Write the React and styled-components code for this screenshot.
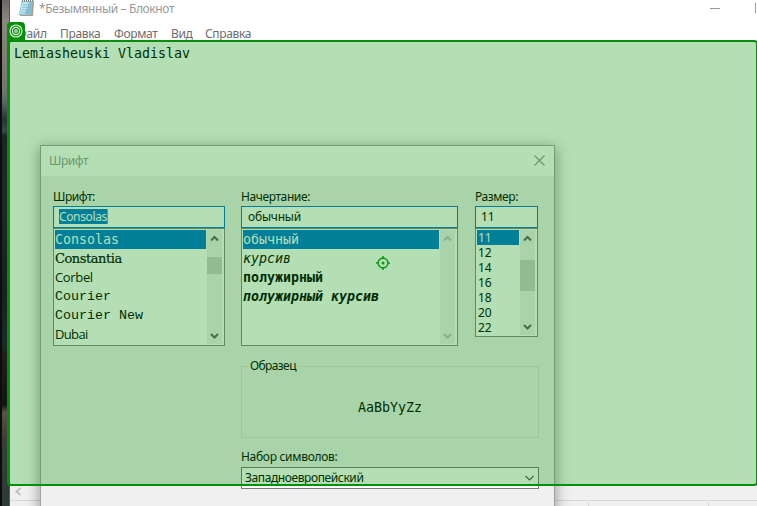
import React from "react";
import styled, { createGlobalStyle, css } from "styled-components";

const Global = createGlobalStyle`
  * { box-sizing: border-box; }
  body { margin: 0; overflow: hidden; font: 12px/16px "Noto Sans", "Open Sans", sans-serif; color: #000; }
`;

const mono = css`font-family: "DejaVu Sans Mono", monospace; font-size: 13.3px; letter-spacing: 0;`;

const Desktop = styled.div`
  position: relative; display: flex; width: 757px; height: 506px; overflow: hidden; background: #fff;
`;
const Wallpaper = styled.div`
  flex: none; width: 10px; border-left: 2px solid #0c0c0c; border-right: 1px solid #555;
  background: linear-gradient(#6b6864 0, #8a8780 20px, #77746f 90px, #5f6a6c 100px, #283238 120px, #3a484c 131px, #1c2426 136px, #202829 200px, #192021 290px, #1d292b 345px, #221d1b 355px, #151515 405px, #5c5047 412px, #403a37 440px, #343e3d 452px, #2d3937 506px);
`;
const Notepad = styled.div`flex: 1; display: flex; flex-direction: column; min-width: 0;`;
const TitleBar = styled.div`
  display: flex; align-items: center; height: 20px; padding: 0 1px 2px 9px; color: #999;
`;
const Title = styled.span`margin-left: 5px; letter-spacing: -.38px; white-space: nowrap;`;
const Minimize = styled.i`margin: 0 35px 1px auto; width: 10px; height: 1px; background: #999;`;
const MaxEdge = styled.i`width: 1px; height: 10px; margin-bottom: 2px; background: #999;`;
const MenuBar = styled.div`display: flex; height: 20px; padding: 6px 0 0 7px; color: #6d6d6d;`;
const MenuItem = styled.span`width: ${p => p.$w}px; letter-spacing: -.35px; white-space: nowrap;`;
const Editor = styled.div`
  ${mono} flex: 1; padding: 4px 4px; border-top: 2px solid #f0f0f0; line-height: 16px;
`;
const HScroll = styled.div`height: 15px; padding: 1px 0 0 3px; background: #f0f0f0;`;
const StatusBar = styled.div`
  display: flex; height: 6px; padding-top: 1px; border-top: 1px solid #d7d7d7; background: #f0f0f0;
`;
const StatusCell = styled.i`width: ${p => p.$w}px; border-right: 1px solid #d7d7d7;`;

const Dialog = styled.div`
  position: absolute; left: 40px; top: 145px; width: 515px; height: 380px;
  border: 1px solid #a2a2a2; background: #f0f0f0; box-shadow: 0 3px 13px 1px rgba(0,0,0,.36);
`;
const DialogTitle = styled.div`
  display: flex; align-items: center; justify-content: space-between; height: 30px;
  padding: 0 9px 0 8px; background: #fff; color: #999; letter-spacing: -.5px;
`;
const CloseIcon = styled.svg`margin-bottom: 2px;`;
const DialogBody = styled.div`padding: 12px 15px 0 12px;`;
const Pickers = styled.div`display: flex; align-items: flex-start;`;
const Field = styled.div`width: ${p => p.$w}px; margin-right: ${p => p.$gap || 0}px;`;
const Label = styled.div`height: 18px; line-height: 17px; letter-spacing: ${p => p.$ls ?? -0.4}px; white-space: nowrap;`;
const Edit = styled.div`
  height: 22px; padding: 2px 5px; border: 1px solid #0078d7; background: #fff; line-height: 16px;
`;
const Selected = styled.span`
  display: inline-block; height: 15px; line-height: 15px; background: #0078d7; color: #fff; border-right: 1px solid #e88b2a; letter-spacing: -.37px;
`;
const EditText = styled.span`padding-left: ${p => p.$pad || 0}px; letter-spacing: -.2px;`;
const List = styled.div`
  display: flex; height: ${p => p.$h}px; padding: 1px 2px 1px 1px; border: 1px solid #828790; background: #fff;
`;
const Items = styled.div`flex: 1; margin-right: 1px;`;
const faces = {
  mono,
  italic: css`${mono} font-style: italic;`,
  bold: css`${mono} font-weight: bold;`,
  boldItalic: css`${mono} font-weight: bold; font-style: italic;`,
  serif: css`font: 500 13px "DejaVu Serif", serif; letter-spacing: -.45px; -webkit-text-stroke: .2px;`,
  sans: css`font-family: "Open Sans", sans-serif; font-size: 13px; letter-spacing: -.35px;`,
  sansTight: css`font-family: "Open Sans", sans-serif; font-size: 13px; letter-spacing: -.65px;`,
  courier: css`font-family: "Liberation Mono", monospace; font-size: 13.33px;`,
  ui: css`font-size: 12px; letter-spacing: -.2px;`,
};
const Item = styled.div`
  ${p => faces[p.$face]}
  height: ${p => p.$h}px; line-height: ${p => p.$h}px; white-space: nowrap; padding-left: ${p => p.$pad || 0}px;
  ${p => p.$on && css`background: #0078d7; color: #fff;`}
`;
const Track = styled.div`
  display: flex; flex-direction: column; justify-content: space-between; width: 15px; background: #f0f0f0;
`;
const Thumb = styled.i`height: ${p => p.$h}px; margin: ${p => p.$top}px 0 auto; background: #cdcdcd;`;
const Arrow = styled.svg`display: block; width: 15px; height: 17px; flex: none;`;

const Lower = styled.div`width: 298px; margin-left: 188px;`;
const Sample = styled.fieldset`
  height: 80px; margin: 12px 0 0; padding: 0 0 0 6px; border: 1px solid #dcdcdc;
`;
const Legend = styled.legend`padding: 0 2px; height: 16px; letter-spacing: -.6px;`;
const SampleText = styled.div`${mono} margin-top: 26px; padding-right: 6px; line-height: 16px; text-align: center;`;
const Charset = styled.div`margin-top: 10px;`;
const Combo = styled.div`
  display: flex; align-items: center; justify-content: space-between; height: 22px; margin-top: 1px; padding: 0 3px;
  border: 1px solid #7a7a7a; background: #fff; letter-spacing: -.4px;
`;

const Highlight = styled.div`
  position: absolute; left: 7px; top: 40px; width: 751px; height: 446px;
  border: 2px solid #078f0b; border-left-width: 3px; border-radius: 4px; background: rgba(5,145,8,.3); background-clip: padding-box;
`;
const Badge = styled.div`
  position: absolute; left: 7px; top: 22px; width: 18px; height: 20px; padding: 1px 0 0 1px;
  border-radius: 4px 4px 0 0; background: #078f0b;
`;
const Pointer = styled.svg`position: absolute; left: 375px; top: 255px;`;

function Chevron({ up, off }) {
  return (
    <Arrow viewBox="0 0 15 17">
      <path d={up ? "M4 10.5 7.5 7 11 10.5" : "M4 7 7.5 10.5 11 7"} fill="none" stroke={off ? "#bfbfbf" : "#606060"} strokeWidth="2.1" />
    </Arrow>
  );
}

function ScrollBar({ top, h, off }) {
  return (
    <Track>
      <Chevron up off={off} />
      {h && <Thumb $h={h} $top={top} />}
      <Chevron off={off} />
    </Track>
  );
}

const fonts = [["Consolas", "mono"], ["Constantia", "serif"], ["Corbel", "sans"], ["Courier", "courier"], ["Courier New", "courier"], ["Dubai", "sansTight"]];
const styles = [["обычный", "mono"], ["курсив", "italic"], ["полужирный", "bold"], ["полужирный курсив", "boldItalic"]];
const sizes = [11, 12, 14, 16, 18, 20, 22];

export default function App() {
  return (
    <Desktop>
      <Global />
      <Wallpaper />
      <Notepad>
        <TitleBar>
          <svg width="15" height="18" viewBox="0 0 15 18">
            <path d="M3 1h12l-1 15H1z" fill="#a99d8c" />
            <path d="M2.5 1h11.2l-1.5 14H0z" fill="#84c3d6" />
            <path d="M3 2h7L6 14H1z" fill="#bfe3ed" />
            <path d="M4 5h8M3.5 7.5h8M3 10h8M2.5 12.5h8" stroke="#70b4c8" strokeWidth=".6" />
            <path d="M3 .8h11" stroke="#777" strokeWidth="1.5" strokeDasharray="1 1" />
          </svg>
          <Title>*Безымянный – Блокнот</Title>
          <Minimize />
          <MaxEdge />
        </TitleBar>
        <MenuBar>
          <MenuItem $w={43}>Файл</MenuItem>
          <MenuItem $w={54}>Правка</MenuItem>
          <MenuItem $w={57}>Формат</MenuItem>
          <MenuItem $w={34}>Вид</MenuItem>
          <MenuItem $w={60}>Справка</MenuItem>
        </MenuBar>
        <Editor>Lemiasheuski Vladislav</Editor>
        <HScroll>
          <svg width="10" height="12" viewBox="0 0 10 12"><path d="M7.5 2 3.5 5.5 7.5 9" fill="none" stroke="#bfbfbf" strokeWidth="2" /></svg>
        </HScroll>
        <StatusBar><StatusCell $w={579} /><StatusCell $w={120} /></StatusBar>
      </Notepad>

      <Dialog>
        <DialogTitle>
          Шрифт
          <CloseIcon width="11" height="11" viewBox="0 0 11 11"><path d="M.5.5l10 10M10.5.5l-10 10" stroke="#999" strokeWidth="1.1" /></CloseIcon>
        </DialogTitle>
        <DialogBody>
          <Pickers>
            <Field $w={172} $gap={16}>
              <Label $ls={-0.5}>Шрифт:</Label>
              <Edit><Selected>Consolas</Selected></Edit>
              <List $h={118}>
                <Items>{fonts.map(([t, f], i) => <Item key={t} $face={f} $h={19} $on={!i}>{t}</Item>)}</Items>
                <ScrollBar top={10} h={17} />
              </List>
            </Field>
            <Field $w={217} $gap={17}>
              <Label>Начертание:</Label>
              <Edit><EditText $pad={1}>обычный</EditText></Edit>
              <List $h={118}>
                <Items>{styles.map(([t, f], i) => <Item key={t} $face={f} $h={19} $on={!i}>{t}</Item>)}</Items>
                <ScrollBar off />
              </List>
            </Field>
            <Field $w={63}>
              <Label>Размер:</Label>
              <Edit><EditText>11</EditText></Edit>
              <List $h={109}>
                <Items>{sizes.map((t, i) => <Item key={t} $face="ui" $h={15} $pad={1} $on={!i}>{t}</Item>)}</Items>
                <ScrollBar top={13} h={31} />
              </List>
            </Field>
          </Pickers>
          <Lower>
            <Sample>
              <Legend>Образец</Legend>
              <SampleText>AaBbYyZz</SampleText>
            </Sample>
            <Charset>
              <Label $ls={-0.3}>Набор символов:</Label>
              <Combo>
                Западноевропейский
                <svg width="11" height="8" viewBox="0 0 11 8"><path d="M1.5 2 5.5 6 9.5 2" fill="none" stroke="#555" strokeWidth="1.1" /></svg>
              </Combo>
            </Charset>
          </Lower>
        </DialogBody>
      </Dialog>

      <Highlight />
      <Badge>
        <svg width="16" height="17" viewBox="0 0 16 17" fill="none" stroke="#e6f6e6" strokeWidth="1.1">
          <circle cx="8" cy="8" r="6" /><circle cx="8" cy="8" r="3.6" /><circle cx="8" cy="8" r="1.3" />
        </svg>
      </Badge>
      <Pointer width="16" height="16" viewBox="0 0 16 16">
        <g fill="none" stroke="#159a1a" strokeWidth="1.6">
          <circle cx="8" cy="8" r="4.9" /><path d="M8 1v2.4M8 12.6V15M1 8h2.4M12.6 8H15" />
        </g>
        <circle cx="8" cy="8" r="1.5" fill="#159a1a" />
      </Pointer>
    </Desktop>
  );
}
